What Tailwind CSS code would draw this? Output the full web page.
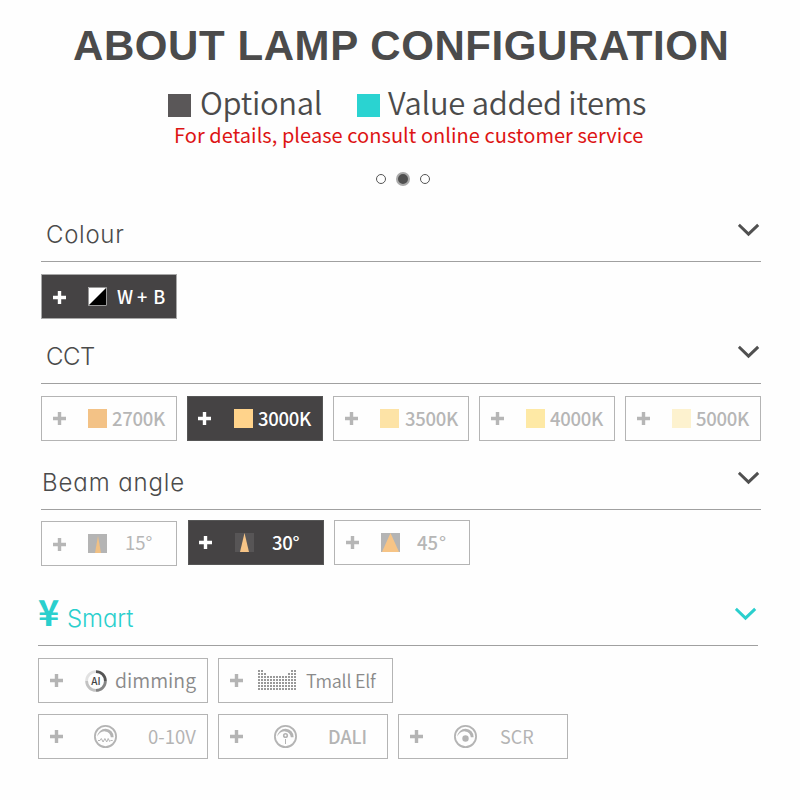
<!DOCTYPE html>
<html lang="en">
<head>
    <meta charset="UTF-8">
    <title>About Lamp Configuration</title>
    <script src="https://cdn.jsdelivr.net/npm/@tailwindcss/browser@4"></script>
</head>

<body class="bg-[#fefefe]">
<svg class="hidden">
    <symbol id="plus" viewBox="0 0 13 13"><path d="M0 6.5h13M6.5 0v13" stroke="currentColor" stroke-width="3.4"/></symbol>
    <symbol id="chevron" viewBox="0 0 22 14"><path d="M.8 1.800 10.500 11.200l9.700-9.400" fill="none" stroke="currentColor" stroke-width="3"/></symbol>
    <!-- dial ring with the thick arc, shared by the dimming options -->
    <symbol id="dial" viewBox="0 0 23 23">
        <circle cx="11.5" cy="11.5" r="10.6" fill="none" stroke="currentColor" stroke-width="1.8"/>
        <path d="M3.4 11.5A8 8 0 0 1 19.6 12.2L16.8 12.2A6.5 6.5 0 0 0 11 6.4C7.5 6 5 8.2 3.4 11.5Z" fill="currentColor"/>
    </symbol>
</svg>

<div class="w-[800px] h-[800px] overflow-hidden flex flex-col font-['Noto_Sans_CJK_SC',sans-serif] text-[#4b4b4b]">
    <!-- Header -->
    <header class="h-[210px] shrink-0 flex flex-col">
        <h1 class="mt-[22px] ml-[73px] h-12 leading-[48px] text-[42px] tracking-[0.58px] font-bold whitespace-nowrap font-['Liberation_Sans',Arial,sans-serif]">ABOUT LAMP CONFIGURATION</h1>
        <div class="mt-[14px] ml-[168px] h-[37px] flex items-center whitespace-nowrap text-[31px] leading-[34px] tracking-[-0.3px] font-[350]">
            <i class="size-[23px] mt-[6px] bg-[#5a5758]"></i>
            <span class="ml-[9px] w-[157px] -mt-px">Optional</span>
            <i class="size-[23px] mt-[6px] bg-[#2ad3d1]"></i>
            <span class="ml-2 -mt-px">Value added items</span>
        </div>
        <p class="mt-[3px] ml-[174px] h-6 leading-[22px] text-[20px] tracking-[0.05px] text-[#dd1414] whitespace-nowrap">For details, please consult online customer service</p>
        <div class="mt-6 ml-[376px] flex items-center h-[14px] gap-[10px]">
            <i class="size-[10px] rounded-full border border-[#555]"></i>
            <i class="size-[14px] rounded-full border-2 border-[#aaa] bg-[#505050]"></i>
            <i class="size-[10px] rounded-full border border-[#555]"></i>
        </div>
    </header>

    <!-- Colour -->
    <section class="ml-[41px] w-[720px] h-[122px] shrink-0">
        <div class="h-[52px] border-b border-[#a0a0a0] flex justify-between pr-px">
            <h2 class="ml-[5px] mt-[9px] text-[24px] leading-8 tracking-[0.7px] font-[350] font-['Inter',sans-serif] [font-feature-settings:'cv11']">Colour</h2>
            <svg class="w-[22px] h-[14px] mt-[13px] text-[#505050]"><use href="#chevron"/></svg>
        </div>
        <div class="mt-3 w-[136px] h-[45px] border border-[#a8a8a8] bg-[#454344] text-white flex items-center pl-[11px]">
            <svg class="size-[13px] mt-px"><use href="#plus"/></svg>
            <svg class="ml-[22px] size-[19px]" viewBox="0 0 19 19"><path d="M0 0h19v19H0z" fill="#fff"/><path d="M19 0v19H0z" fill="#000"/><path d="M.5 .5h18v18H.5z" fill="none" stroke="#999"/></svg>
            <span class="ml-[10px] -mt-[2px] text-[18px] leading-6 font-medium whitespace-nowrap">W<span class="ml-[4px]">+</span><span class="ml-[6px]">B</span></span>
        </div>
    </section>

    <!-- CCT -->
    <section class="ml-[41px] w-[720px] h-[126px] shrink-0">
        <div class="h-[52px] border-b border-[#a0a0a0] flex justify-between pr-px">
            <h2 class="ml-[5px] mt-[9px] text-[24px] leading-8 tracking-[-0.5px] font-[350] font-['Inter',sans-serif] [font-feature-settings:'cv11']">CCT</h2>
            <svg class="w-[22px] h-[14px] mt-[13px] text-[#505050]"><use href="#chevron"/></svg>
        </div>
        <div class="mt-3 flex gap-[10px] text-[#b6b6b6] text-[18.5px] tracking-[-0.3px] leading-6 font-medium">
            <div class="w-[136px] h-[45px] border border-[#b4b4b4] flex items-center pl-[11px]">
                <svg class="size-[13px]"><use href="#plus"/></svg>
                <i class="ml-[22px] size-[19px] bg-[#f3c286]"></i>
                <span class="ml-[5px] -mt-[2px]">2700K</span>
            </div>
            <div class="w-[136px] h-[45px] border border-[#565656] bg-[#454344] text-white flex items-center pl-[10px]">
                <svg class="size-[13px]"><use href="#plus"/></svg>
                <i class="ml-[23px] size-[19px] bg-[#ffd38b]"></i>
                <span class="ml-[5px] -mt-[2px]">3000K</span>
            </div>
            <div class="w-[136px] h-[45px] border border-[#b4b4b4] flex items-center pl-[11px]">
                <svg class="size-[13px]"><use href="#plus"/></svg>
                <i class="ml-[22px] size-[19px] bg-[#fde3a6]"></i>
                <span class="ml-[6px] -mt-[2px]">3500K</span>
            </div>
            <div class="w-[136px] h-[45px] border border-[#b4b4b4] flex items-center pl-[11px]">
                <svg class="size-[13px]"><use href="#plus"/></svg>
                <i class="ml-[22px] size-[19px] bg-[#fee9a5]"></i>
                <span class="ml-[5px] -mt-[2px]">4000K</span>
            </div>
            <div class="w-[136px] h-[45px] border border-[#b4b4b4] flex items-center pl-[11px]">
                <svg class="size-[13px]"><use href="#plus"/></svg>
                <i class="ml-[22px] size-[19px] bg-[#fdf2cf]"></i>
                <span class="ml-[5px] -mt-[2px]">5000K</span>
            </div>
        </div>
    </section>

    <!-- Beam angle -->
    <section class="ml-[41px] w-[720px] h-[136px] shrink-0">
        <div class="h-[52px] border-b border-[#a0a0a0] flex justify-between pr-px">
            <h2 class="ml-px mt-[9px] text-[24px] leading-8 tracking-[0.9px] font-[350] font-['Inter',sans-serif] [font-feature-settings:'cv11']">Beam angle</h2>
            <svg class="w-[22px] h-[14px] mt-[13px] text-[#505050]"><use href="#chevron"/></svg>
        </div>
        <div class="mt-[10px] flex text-[#b6b6b6] text-[18.5px] leading-6 font-medium">
            <div class="mt-px w-[136px] h-[45px] border border-[#b4b4b4] flex items-center pl-[11px]">
                <svg class="size-[13px] mt-[2px]"><use href="#plus"/></svg>
                <svg class="ml-[22px] size-[19px]" viewBox="0 0 19 19"><path d="M0 0h19v19H0z" fill="#b4b4b4"/><path d="M10 2 13 19H7z" fill="#f0c084"/></svg>
                <span class="ml-[18px] -mt-[3px] font-normal">15°</span>
            </div>
            <div class="ml-[11px] w-[136px] h-[45px] border border-[#565656] bg-[#454344] text-white flex items-center pl-[10px]">
                <svg class="size-[13px]"><use href="#plus"/></svg>
                <svg class="ml-[23px] size-[19px]" viewBox="0 0 19 19"><path d="M0 0h19v19H0z" fill="#575556"/><path d="M9.5 0 14 19H5z" fill="#f6c486"/></svg>
                <span class="ml-[18px] -mt-[2px] tracking-[-0.3px]">30°</span>
            </div>
            <div class="ml-[10px] w-[136px] h-[45px] border border-[#b4b4b4] flex items-center pl-[11px]">
                <svg class="size-[13px]"><use href="#plus"/></svg>
                <svg class="ml-[22px] size-[19px]" viewBox="0 0 19 19"><path d="M0 0h19v19H0z" fill="#b4b4b4"/><path d="M9.5 0 18 19H1z" fill="#f6c486"/></svg>
                <span class="ml-[17px] -mt-[2px]">45<span class="ml-px">°</span></span>
            </div>
        </div>
    </section>

    <!-- Smart -->
    <section class="ml-[38px] w-[720px] shrink-0">
        <div class="h-[52px] border-b border-[#a0a0a0] flex justify-between pr-px text-[#2acfcd]">
            <div class="flex">
                <span class="-mt-[4px] w-[29px] h-10 text-[36px] leading-10 font-bold">¥</span>
                <h2 class="mt-[9px] text-[24px] leading-8 tracking-[-0.1px] font-[350] font-['Inter',sans-serif] [font-feature-settings:'cv11']">Smart</h2>
            </div>
            <svg class="w-[22px] h-[14px] mt-[13px]"><use href="#chevron"/></svg>
        </div>
        <div class="mt-3 flex gap-[10px] text-[#8a8a8a] text-[19.5px] leading-6">
            <div class="w-[170px] h-[45px] border border-[#b4b4b4] flex items-center pl-[11px]">
                <svg class="size-[13px] text-[#b4b4b4]"><use href="#plus"/></svg>
                <svg class="ml-[22px] size-[22px]" viewBox="0 0 22 22" fill="none" stroke-width="2.8">
                    <path d="M11 1.6A9.4 9.4 0 0 1 20.4 11" stroke="#555"/>
                    <path d="M20.4 11A9.4 9.4 0 0 1 11 20.4" stroke="#858585"/>
                    <path d="M11 20.4A9.4 9.4 0 0 1 1.6 11" stroke="#c2c2c2"/>
                    <path d="M1.6 11A9.4 9.4 0 0 1 11 1.6" stroke="#e2e2e2"/>
                    <text x="11" y="14.5" text-anchor="middle" font-size="10" font-weight="500" fill="#444" font-family="Noto Sans CJK SC, sans-serif">AI</text>
                </svg>
                <span class="ml-[8px] -mt-[2px] font-[350]">dimming</span>
            </div>
            <div class="w-[175px] h-[45px] border border-[#b4b4b4] flex items-center pl-[11px]">
                <svg class="size-[13px] text-[#b4b4b4]"><use href="#plus"/></svg>
                <svg class="ml-[15px] w-10 h-[22px]" viewBox="0 0 40 22">
                    <pattern id="dots" width="3" height="3" patternUnits="userSpaceOnUse"><rect width="2" height="2" fill="#999"/></pattern>
                    <path d="M0 0H6V3H9V6H30V3H33V0H39V21H0z" fill="url(#dots)"/>
                </svg>
                <span class="ml-[8px] -mt-[2px] text-[18px] tracking-[-0.25px] font-[350] whitespace-nowrap">Tmall Elf</span>
            </div>
        </div>
        <div class="mt-[11px] flex gap-[10px] text-[#b4b4b4] text-[18px] leading-6">
            <div class="w-[170px] h-[45px] border border-[#b4b4b4] flex items-center pl-[11px]">
                <svg class="size-[13px]"><use href="#plus"/></svg>
                <svg class="ml-[31px] size-[23px]" viewBox="0 0 23 23"><use href="#dial" width="23" height="23"/><path d="M4 15.5h2l1.3-2 1.8 3.5 1.8-3.5 1.8 3.5 1.5-3.5 1.5 3 1-1h2" fill="none" stroke="currentColor"/></svg>
                <span class="ml-[31px] -mt-[2px] text-[18.5px]">0-10V</span>
            </div>
            <div class="w-[170px] h-[45px] border border-[#b4b4b4] flex items-center pl-[11px]">
                <svg class="size-[13px]"><use href="#plus"/></svg>
                <svg class="ml-[31px] size-[23px]" viewBox="0 0 23 23"><use href="#dial" width="23" height="23"/><circle cx="11.5" cy="10.5" r="1.8" fill="none" stroke="currentColor" stroke-width="1.6"/><path d="M11.5 14v5" stroke="currentColor"/></svg>
                <span class="ml-[31px] -mt-[2px] font-medium">DALI</span>
            </div>
            <div class="w-[170px] h-[45px] border border-[#b4b4b4] flex items-center pl-[11px]">
                <svg class="size-[13px]"><use href="#plus"/></svg>
                <svg class="ml-[31px] size-[23px]" viewBox="0 0 23 23"><use href="#dial" width="23" height="23"/><circle cx="11.5" cy="13.5" r="3.2" fill="currentColor"/></svg>
                <span class="ml-[23px] -mt-[2px]">SCR</span>
            </div>
        </div>
    </section>
</div>
</body>
</html>
